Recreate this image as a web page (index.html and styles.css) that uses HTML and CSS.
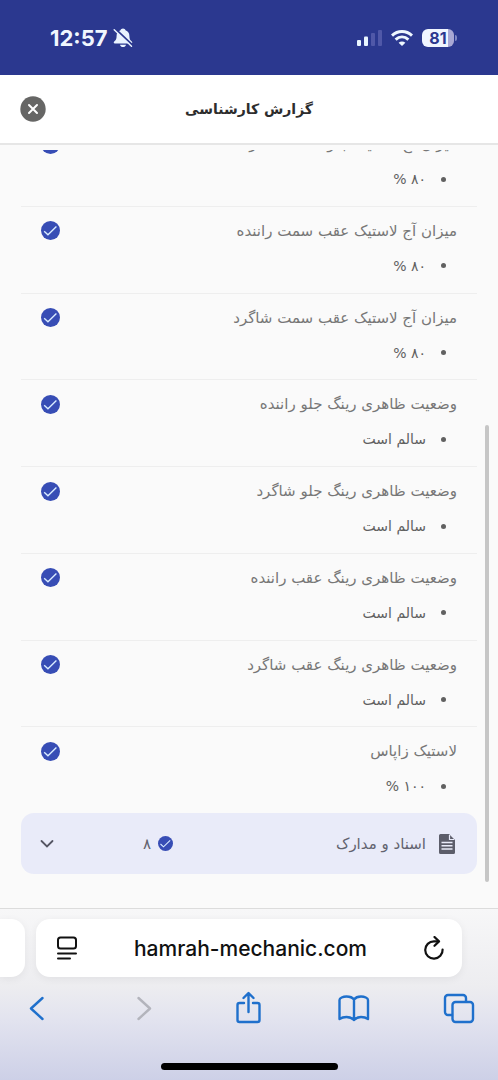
FILE: index.html
```html
<!DOCTYPE html>
<html lang="fa" dir="rtl">
<head>
<meta charset="utf-8">
<meta name="viewport" content="width=device-width, initial-scale=1">
<title>گزارش کارشناسی</title>
<link rel="stylesheet" href="styles.css">
</head>
<body>
<svg class="sprite" aria-hidden="true">
  <symbol id="check" viewBox="0 0 18 18">
    <circle cx="9" cy="9" r="9" fill="#374db5"/>
    <path d="M3 9.600 6.600 13 14.600 5.200" fill="none" stroke="#d9ecff" stroke-width="1.300"/>
  </symbol>
</svg>
<div class="page">
  <div class="status" dir="ltr">
    <div class="status-left">
      <span class="clock">12:57</span>
      <svg width="20" height="20" viewBox="0 0 20 20" aria-hidden="true">
        <path d="M10 .5c-1.300 0-2.200.8-2.500 1.800C4.800 3.300 3.600 5.400 3.600 8c0 3-.8 4.200-2.400 5.600-.9.900-.5 2 .7 2h16.200c1.200 0 1.600-1.100.7-2C17.200 12.200 16.400 11 16.400 8c0-2.600-1.200-4.700-3.900-5.700C12.200 1.300 11.300.5 10 .5z" fill="#e9f3ff"/>
        <path d="M7 16.800h6c-.3 1.500-1.500 2.300-3 2.300s-2.700-.8-3-2.300z" fill="#e9f3ff"/>
        <path d="M2.500 1 20 17.500" stroke="#2b388f" stroke-width="1.800"/>
        <path d="M1.200 1.800 18.500 18.200" stroke="#e9f3ff" stroke-width="1.500" stroke-linecap="round"/>
      </svg>
    </div>
    <div class="status-right">
      <svg width="25" height="17" viewBox="0 0 25 17" aria-hidden="true">
        <rect x="0" y="11" width="4" height="6" rx="1" fill="#e9f5ff"/>
        <rect x="7" y="7.500" width="4" height="9.500" rx="1" fill="#e9f5ff"/>
        <rect x="14" y="4" width="4" height="13" rx="1" fill="#5058a8"/>
        <rect x="21" y="1" width="4" height="16" rx="1" fill="#5058a8"/>
      </svg>
      <svg width="22" height="16" viewBox="0 0 22 16" aria-hidden="true">
        <g fill="none" stroke="#eef7ff" stroke-width="3">
          <path d="M1 5.600C6.800.2 15.200.2 21 5.600"/>
          <path d="M4.600 9.600c3.800-3.400 9-3.400 12.800 0"/>
        </g>
        <path d="M7.600 12.700c2-1.700 4.800-1.700 6.800 0L11 16z" fill="#eef7ff"/>
      </svg>
      <span class="battery">81</span>
    </div>
  </div>

  <header class="titlebar">
    <h1>گزارش کارشناسی</h1>
    <button class="close" type="button" aria-label="بستن">
      <svg width="26" height="26" viewBox="0 0 26 26"><circle cx="13" cy="13" r="12.700" fill="#666665"/><path d="M9 9l8 8M17 9l-8 8" stroke="#fff" stroke-width="2" stroke-linecap="round"/></svg>
    </button>
  </header>

  <main class="scroller">
    <ul class="rows">
      <li class="row"><div class="row-head"><span>میزان آج لاستیک جلو سمت شاگرد</span><svg class="tick"><use href="#check"/></svg></div><p class="value">۸۰ %</p></li>
      <li class="row"><div class="row-head"><span>میزان آج لاستیک عقب سمت راننده</span><svg class="tick"><use href="#check"/></svg></div><p class="value">۸۰ %</p></li>
      <li class="row"><div class="row-head"><span>میزان آج لاستیک عقب سمت شاگرد</span><svg class="tick"><use href="#check"/></svg></div><p class="value">۸۰ %</p></li>
      <li class="row"><div class="row-head"><span>وضعیت ظاهری رینگ جلو راننده</span><svg class="tick"><use href="#check"/></svg></div><p class="value">سالم است</p></li>
      <li class="row"><div class="row-head"><span>وضعیت ظاهری رینگ جلو شاگرد</span><svg class="tick"><use href="#check"/></svg></div><p class="value">سالم است</p></li>
      <li class="row"><div class="row-head"><span>وضعیت ظاهری رینگ عقب راننده</span><svg class="tick"><use href="#check"/></svg></div><p class="value">سالم است</p></li>
      <li class="row"><div class="row-head"><span>وضعیت ظاهری رینگ عقب شاگرد</span><svg class="tick"><use href="#check"/></svg></div><p class="value">سالم است</p></li>
      <li class="row"><div class="row-head"><span>لاستیک زاپاس</span><svg class="tick"><use href="#check"/></svg></div><p class="value">۱۰۰ %</p></li>
    </ul>
    <button class="section" type="button" aria-expanded="false">
      <svg width="16" height="20" viewBox="0 0 16 20" aria-hidden="true"><path d="M1.500 0H10l6 6v12.500a1.500 1.500 0 0 1-1.500 1.500h-13A1.500 1.500 0 0 1 0 18.500v-17A1.500 1.500 0 0 1 1.500 0z" fill="#5c5d6a"/><path d="M10.500 1v4.500H15" fill="none" stroke="#e9ebf9" stroke-width="1.200"/><path d="M2.500 8.500h11M2.500 11.700h11M2.500 15h11" stroke="#e9ebf9" stroke-width="1.500"/></svg>
      <span class="section-name">اسناد و مدارک</span>
      <span class="count"><svg width="15" height="15"><use href="#check"/></svg><span>۸</span></span>
      <svg width="14" height="10" viewBox="0 0 14 10" aria-hidden="true"><path d="M1.500 2 7 7.500 12.500 2" fill="none" stroke="#555663" stroke-width="1.800" stroke-linecap="round"/></svg>
    </button>
    <div class="thumb"></div>
  </main>

  <footer class="browser" dir="ltr">
    <div class="tabs">
      <div class="peek"></div>
      <div class="address">
        <button type="button" aria-label="Page menu">
          <svg width="20" height="24" viewBox="0 0 20 24" fill="none" stroke="#111" stroke-width="2" stroke-linecap="round"><rect x="1" y="1.500" width="18" height="11" rx="2.500"/><path d="M1 17.500h18M1 22.500h12"/></svg>
        </button>
        <input type="text" aria-label="Address" value="hamrah-mechanic.com">
        <button type="button" aria-label="Reload">
          <svg width="20" height="24" viewBox="0 0 20 24" fill="none" stroke="#111" stroke-width="2.200" stroke-linecap="round" stroke-linejoin="round"><path d="M18.600 13.500A8.700 8.700 0 1 1 10 5.300h4"/><path d="M10.500 1 15 5.400 10.500 9.800"/></svg>
        </button>
      </div>
    </div>
    <nav class="tools">
      <button type="button" aria-label="Back"><svg width="32" height="34" viewBox="0 0 32 34"><path d="M21.500 7 10 17.500 21.500 28"/></svg></button>
      <button type="button" aria-label="Forward" disabled><svg width="32" height="34" viewBox="0 0 32 34"><path d="M11.500 7 23 17.500 11.500 28"/></svg></button>
      <button type="button" aria-label="Share"><svg width="32" height="34" viewBox="0 0 32 34"><path d="M12 12H7.500a2 2 0 0 0-2 2v15a2 2 0 0 0 2 2h18a2 2 0 0 0 2-2V14a2 2 0 0 0-2-2H21M16.500 21V2.500M11.500 7l5-5 5 5"/></svg></button>
      <button type="button" aria-label="Bookmarks"><svg width="32" height="34" viewBox="0 0 32 34"><path d="M16 8.500C14.500 6.500 12 5.500 8.500 5.500S1.500 7 1.500 9v19c2-1.400 4.500-2 7-2s5.500 1 7.500 3c2-2 4.500-3 7-3s5 .6 7 2V9c0-2-3.500-3.500-7-3.500S17.500 6.500 16 8.500zV29"/></svg></button>
      <button type="button" aria-label="Tabs"><svg width="32" height="34" viewBox="0 0 32 34"><rect x="9.500" y="11" width="20.500" height="20" rx="3"/><path d="M9 24H5a3 3 0 0 1-3-3V7a3 3 0 0 1 3-3h15a3 3 0 0 1 3 3v3.500"/></svg></button>
    </nav>
    <div class="home"></div>
  </footer>
</div>
</body>
</html>
```
FILE: styles.css
```css
* { box-sizing: border-box; }
body {
  margin: 0;
  background: #fafafa;
  color: #777;
  font-family: "DejaVu Sans", sans-serif;
  font-size: 15px;
}
button, input { border: 0; padding: 0; background: none; color: inherit; font: inherit; }
svg { display: block; flex: none; }
.sprite { position: absolute; width: 0; height: 0; }
.page { display: flex; flex-direction: column; height: 100vh; overflow: hidden; }

.status {
  flex: none;
  display: flex;
  justify-content: space-between;
  align-items: center;
  height: 75px;
  padding: 0 42px 0 50px;
  background: #2b388f;
  color: #f0f7ff;
  font-family: Inter, sans-serif;
}
.status-left { display: flex; align-items: center; gap: 5px; }
.clock { font-size: 22px; font-weight: 700; }
.status-right { display: flex; align-items: center; gap: 9px; }
.battery {
  position: relative;
  width: 32px;
  height: 18px;
  margin-right: 2px;
  border-radius: 6px;
  background: linear-gradient(90deg, #f0f5ff 26px, #a9a8d4 26px);
  color: #2b388f;
  font-size: 16px;
  font-weight: 700;
  line-height: 18px;
  text-align: center;
}
.battery::after {
  content: "";
  position: absolute;
  right: -3px;
  top: 6px;
  width: 2px;
  height: 6px;
  border-radius: 0 2px 2px 0;
  background: #8088c4;
}

.titlebar {
  flex: none;
  display: grid;
  grid-template-columns: 26px 1fr 26px;
  align-items: center;
  height: 70px;
  padding: 0 20px;
  border-bottom: 2px solid #e6e6e6;
  background: #fff;
}
.titlebar h1 { grid-column: 2; margin: 0; color: #2d2d2d; font-size: 14px; font-weight: 700; text-align: center; }

.scroller {
  position: relative;
  flex: 1;
  min-height: 0;
  display: flex;
  flex-direction: column;
  margin-top: 5px;
  padding: 0 21px 34px;
  overflow: hidden;
}
.rows { flex: 1; display: flex; flex-direction: column; margin: -30px 0 0; padding: 0; list-style: none; }
.row { flex: 1 0 0; padding: 12px 20px 0; border-bottom: 1px solid #eee; }
.row:last-child { border-bottom: 0; }
.row-head { display: flex; justify-content: space-between; align-items: center; height: 24px; }
.tick { width: 19px; height: 19px; }
.value {
  display: flex;
  align-items: center;
  gap: 15px;
  margin: 11px 0 0;
  padding-right: 11px;
  color: #606060;
  font-size: 14px;
  line-height: 24px;
}
.value::before { content: ""; width: 5px; height: 5px; border-radius: 50%; background: #606060; }

.section {
  flex: none;
  display: flex;
  align-items: center;
  width: 100%;
  height: 61px;
  padding: 0 22px 0 19px;
  border-radius: 13px;
  background: #e9ebf9;
  color: #62636f;
}
.section-name { flex: 1; margin-right: 13px; text-align: right; }
.count { display: flex; align-items: center; gap: 7px; margin-left: 89px; }
.thumb {
  position: absolute;
  right: 9px;
  top: 275px;
  bottom: 26px;
  width: 4px;
  border-radius: 2px;
  background: #c6c6c6;
}

.browser {
  flex: none;
  padding-top: 10px;
  border-top: 1px solid #dcdcdc;
  background: linear-gradient(#f7f7f8, #ededf0 45%, #e2e3ef 65%, #cdd0e7);
}
.tabs { display: flex; gap: 11px; padding-right: 36px; }
.peek, .address { height: 58px; background: #fff; box-shadow: 0 2px 8px rgba(0, 0, 0, 0.06); }
.peek { width: 25px; border-radius: 0 14px 14px 0; }
.address { flex: 1; display: flex; align-items: center; padding: 0 18px 0 21px; border-radius: 14px; }
.address input {
  flex: 1;
  min-width: 0;
  color: #111;
  font-family: Inter, sans-serif;
  font-size: 21px;
  font-weight: 500;
  text-align: center;
}
.tools { display: flex; justify-content: space-between; padding: 14px 23px 0 21px; }
.tools svg { fill: none; stroke: #1f70cc; stroke-width: 2.4px; stroke-linecap: round; stroke-linejoin: round; }
.tools button:disabled svg { stroke: #b3b4bc; }
.home { width: 177px; height: 7px; margin: 38px auto 10px; border-radius: 4px; background: #000; }
```
